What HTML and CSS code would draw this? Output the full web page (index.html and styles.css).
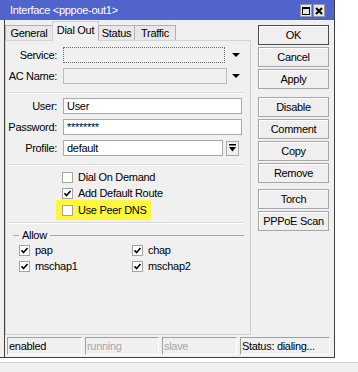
FILE: index.html
```html
<!DOCTYPE html>
<html>
<head>
    <title>Interface &lt;pppoe-out1&gt;</title>
    <link rel="stylesheet" href="styles.css">
</head>
<body>
    <div class="window">
        <div class="titlebar">
            <span class="title">Interface &lt;pppoe-out1&gt;</span>
            <div class="title-buttons">
                <span class="tbtn"><svg width="8" height="8" viewBox="0 0 8 8"><rect x="0.5" y="0.5" width="7" height="7" fill="none" stroke="#000"/><line x1="0" y1="1.5" x2="8" y2="1.5" stroke="#000"/></svg></span>
                <span class="tbtn"><svg width="8" height="8" viewBox="0 0 8 8"><path d="M1 1 L7 7 M7 1 L1 7" stroke="#000" stroke-width="2"/></svg></span>
            </div>
        </div>
        <div class="frame">
            <div class="main">
                <div class="left">
                    <div class="tabs">
                        <span class="tab t-general">General</span>
                        <span class="tab active t-dial">Dial Out</span>
                        <span class="tab t-status">Status</span>
                        <span class="tab t-traffic">Traffic</span>
                    </div>
                    <div class="panel">
                        <div class="row first">
                            <label>Service:</label>
                            <div class="field combo focus"></div>
                            <span class="drop"></span>
                        </div>
                        <div class="row">
                            <label>AC Name:</label>
                            <div class="field combo wide"></div>
                            <span class="drop"></span>
                        </div>
                        <div class="sep"></div>
                        <div class="row">
                            <label>User:</label>
                            <div class="field full">User</div>
                        </div>
                        <div class="row">
                            <label>Password:</label>
                            <div class="field full">********</div>
                        </div>
                        <div class="row">
                            <label>Profile:</label>
                            <div class="field">default</div>
                            <span class="pick"><svg width="7" height="8" viewBox="0 0 7 8"><rect x="0" y="0" width="7" height="1.5" fill="#000"/><path d="M0 3 L7 3 L3.5 7.5 Z" fill="#000"/></svg></span>
                        </div>
                        <div class="sep"></div>
                        <div class="checks">
                            <div class="check"><span class="box"></span>Dial On Demand</div>
                            <div class="check"><span class="box on"></span>Add Default Route</div>
                            <div class="check marked"><span class="box"></span>Use Peer DNS</div>
                        </div>
                        <div class="sep low"></div>
                        <div class="legend"><span>Allow</span></div>
                        <div class="allow">
                            <div class="check"><span class="box on"></span>pap</div>
                            <div class="check"><span class="box on"></span>chap</div>
                            <div class="check"><span class="box on"></span>mschap1</div>
                            <div class="check"><span class="box on"></span>mschap2</div>
                        </div>
                    </div>
                </div>
                <div class="buttons">
                    <button class="default">OK</button>
                    <button>Cancel</button>
                    <button>Apply</button>
                    <button class="gap">Disable</button>
                    <button>Comment</button>
                    <button>Copy</button>
                    <button>Remove</button>
                    <button class="gap-small">Torch</button>
                    <button>PPPoE Scan</button>
                </div>
            </div>
            <div class="statusbar">
                <span class="cell">enabled</span>
                <span class="cell dim">running</span>
                <span class="cell dim">slave</span>
                <span class="cell">Status: dialing...</span>
            </div>
        </div>
    </div>
    <div class="strip"></div>
</body>
</html>
```

FILE: styles.css
```css
body {
    margin: 0;
    padding: 0;
    background: #ffffff;
    font-family: "Liberation Sans", Arial, sans-serif;
    font-size: 11px;
    letter-spacing: -0.3px;
    color: #000;
}
.window {
    width: 335px;
    height: 358px;
    box-sizing: border-box;
    background: #f0f0f0;
    border-right: 1px solid #3f3f3f;
    border-bottom: 1px solid #3f3f3f;
    display: flex;
    flex-direction: column;
}
.titlebar {
    height: 20px;
    background: #5064cc;
    color: #fff;
    display: flex;
    align-items: center;
    justify-content: space-between;
    padding: 0 9px 0 10px;
}
.title-buttons {
    display: flex;
    gap: 1px;
    margin-top: 1px;
}
.tbtn {
    width: 10px;
    height: 11px;
    background: #e6e6e6;
    border: 1px solid #9a9a9a;
    display: flex;
    align-items: center;
    justify-content: center;
}
.frame {
    flex: 1;
    margin-left: 4px;
    border-left: 1px solid #3f3f3f;
    display: flex;
    flex-direction: column;
}
.main {
    display: flex;
    height: 315px;
}
.left {
    width: 246px;
    display: flex;
    flex-direction: column;
}
.tabs {
    height: 20px;
    display: flex;
    align-items: flex-end;
    position: relative;
    z-index: 1;
}
.tab {
    box-sizing: border-box;
    height: 15px;
    line-height: 14px;
    text-align: center;
    background: #e8e8e8;
    border: 1px solid #b0b0b0;
    border-bottom: none;
    margin-right: -1px;
}
.t-general {
    width: 48px;
}
.t-dial {
    width: 47px;
}
.t-status {
    width: 37px;
}
.t-traffic {
    width: 42px;
}
.tab.active {
    height: 20px;
    line-height: 17px;
    background: #f0f0f0;
    border-color: #d0d0d0;
    margin-bottom: -1px;
}
.panel {
    flex: 1;
    border: 1px solid #d4d4d4;
    border-right-color: #cfcfcf;
    display: flex;
    flex-direction: column;
    padding: 0 6px 0 0;
}
.row {
    display: flex;
    align-items: center;
    height: 16px;
    margin-top: 5px;
}
.row.first {
    margin-top: 6px;
}
.row label {
    width: 51px;
    text-align: right;
    margin-right: 6px;
}
.field {
    width: 160px;
    height: 16px;
    box-sizing: border-box;
    background: #fff;
    border: 1px solid #a9a9a9;
    line-height: 14px;
    padding-left: 3px;
}
.field.full {
    width: 179px;
}
.field.combo {
    background: #f0f0f0;
    border-color: #bcbcbc;
    width: 162px;
}
.field.combo.wide {
    width: 164px;
}
.field.focus {
    border: 1px dotted #6a6a6a;
}
.drop {
    width: 0;
    height: 0;
    border-left: 4px solid transparent;
    border-right: 4px solid transparent;
    border-top: 4px solid #000;
    margin-left: 7px;
}
.row:nth-child(2) .drop {
    margin-left: 5px;
}
.pick {
    width: 13px;
    height: 15px;
    box-sizing: border-box;
    margin-left: 3px;
    background: #f0f0f0;
    border: 1px solid #a9a9a9;
    display: flex;
    align-items: center;
    justify-content: center;
}
.sep {
    height: 1px;
    margin: 8px 0 0 2px;
    background: #d9d9d9;
    border-bottom: 1px solid #ffffff;
}
.sep + .row {
    margin-top: 4px;
}
.checks {
    margin-top: 3px;
    display: flex;
    flex-direction: column;
    padding-left: 56px;
}
.check {
    height: 16px;
    display: flex;
    align-items: center;
}
.box {
    width: 11px;
    height: 11px;
    box-sizing: border-box;
    background: #fff;
    border: 1px solid #a3a3a3;
    margin-right: 5px;
    display: inline-block;
}
.box.on {
    background: #fff url("data:image/svg+xml;utf8,<svg xmlns='http://www.w3.org/2000/svg' width='9' height='9' viewBox='0 0 9 9'><path d='M1.5 4.2 L3.5 6.5 L7.5 2' fill='none' stroke='black' stroke-width='1.6'/></svg>") no-repeat center;
}
.check.marked {
    background: #fbf83e;
    margin: -1px 0 0 -6px;
    padding: 2px 0 2px 6px;
    width: 89px;
}
.sep.low {
    margin-top: 2px;
}
.legend {
    height: 14px;
    margin-top: 4px;
    display: flex;
    align-items: center;
    padding-left: 7px;
}
.legend::before {
    content: "";
    width: 6px;
    border-top: 1px solid #a8a8a8;
    margin-right: 3px;
}
.legend::after {
    content: "";
    flex: 1;
    border-top: 1px solid #a8a8a8;
    margin-left: 3px;
}
.allow {
    display: grid;
    grid-template-columns: 113px auto;
    padding-left: 13px;
}
.buttons {
    width: 71px;
    margin-left: 7px;
    padding-top: 5px;
    display: flex;
    flex-direction: column;
    gap: 2px;
}
.buttons button {
    height: 20px;
    margin: 0;
    padding: 0;
    font: inherit;
    letter-spacing: inherit;
    color: #000;
    background: #efefef;
    border: 1px solid #a6a6a6;
    box-shadow: inset 1px 1px 0 #fff;
}
.buttons button.default {
    border-color: #4a4a4a;
}
.buttons button.gap {
    margin-top: 6px;
}
.buttons button.gap-small {
    margin-top: 4px;
}
.statusbar {
    margin: 2px 0 0 2px;
    width: 323px;
    height: 18px;
    display: grid;
    grid-template-columns: 75px 74px 75px auto;
    gap: 3px;
}
.cell {
    box-sizing: border-box;
    border-top: 1px solid #a0a0a0;
    border-left: 1px solid #a0a0a0;
    border-right: 1px solid #fff;
    border-bottom: 1px solid #fff;
    line-height: 16px;
    padding-left: 1px;
    white-space: nowrap;
    overflow: hidden;
}
.cell.dim {
    color: #a8a8a8;
}
.strip {
    margin-top: 4px;
    height: 10px;
    background: #f0f0f0;
    border-top: 1px solid #d4d4d4;
}
```
